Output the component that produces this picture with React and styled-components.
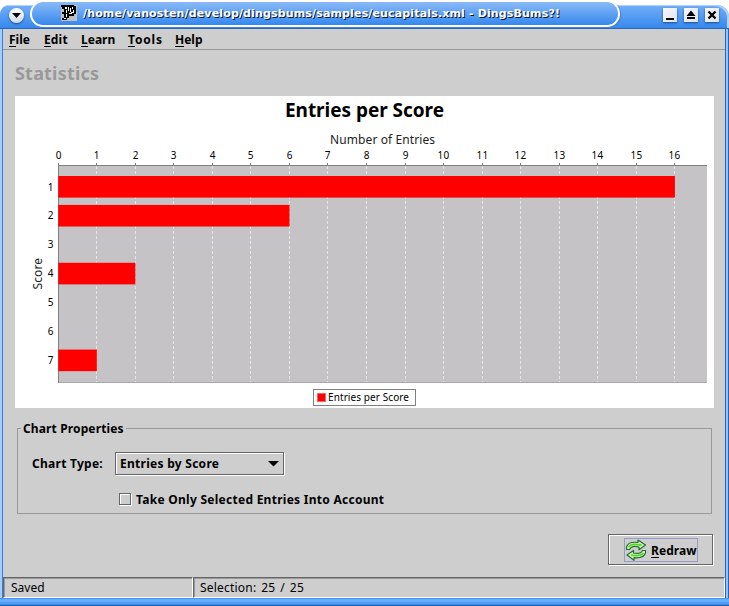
import React from 'react';
import styled, { createGlobalStyle } from 'styled-components';

const GlobalStyle = createGlobalStyle`
  body {
    margin: 0;
    background: #ffffff;
    overflow: hidden;
  }
  * { box-sizing: border-box; }
`;

const Window = styled.div`
  display: flex;
  flex-direction: column;
  width: 729px;
  height: 606px;
  font: bold 12px/16px 'Noto Sans', sans-serif;
  color: #000000;
  white-space: nowrap;
  cursor: default;
`;

const TitleBar = styled.header`
  display: grid;
  grid-template-columns: 30px 590px 1fr;
  height: 24px;
  background: linear-gradient(#73aff8, #3688ee);
  border-radius: 9px 12px 0 0;
  border-bottom: 1px solid #2868b6;
  box-shadow: inset -2px 1px 0 #b0d3ff;
`;

const TitleBack = styled.div`
  padding-top: 5px;
  background: #ffffff;
  width: 729px;
  flex: none;
`;

const MenuKnob = styled.button`
  width: 15px;
  height: 15px;
  margin: 3px 0 0 9px;
  padding: 0;
  border: 0;
  border-radius: 50%;
  background: linear-gradient(#ffffff, #d3d8e5);
  box-shadow: 0 1px 2px #174d92;
  display: grid;
  place-items: center;
`;

const TitleTab = styled.div`
  display: flex;
  align-items: flex-start;
  height: 26px;
  margin-top: -4px;
  padding: 3px 0 0 29px;
  border: solid #ffffff;
  border-width: 1px 2px 2px;
  border-radius: 13px;
  background: linear-gradient(#8abaf9, #3588ed);
  box-shadow: 1px 1px 1px #4380cb;
`;

const TitleText = styled.h1`
  margin: 2px 0 0 6px;
  font: bold 11px/14px 'DejaVu Sans', sans-serif;
  letter-spacing: 0.15px;
  color: #ffffff;
  text-shadow: 1px 1px 0 #0a1730;
`;

const WindowButtons = styled.div`
  display: flex;
  gap: 7px;
  padding: 3px 0 0 43px;
`;

const WindowButton = styled.button`
  width: 14px;
  height: 14px;
  padding: 0;
  border: 0;
  background: linear-gradient(135deg, #f9f9fb, #dfe0e8);
  box-shadow: 0 1px 2px #174d92;
  display: grid;
  place-items: center;
`;

const Frame = styled.div`
  flex: 1;
  display: flex;
  flex-direction: column;
  border: solid;
  border-width: 0 4px 0 3px;
  border-image: linear-gradient(to right, #a4ccff 0 2px, #347fd9 2px 3px, #ffffff 3px 725px, #2868b6 725px 726px, #91c3ff 726px 728px, #2565b0 728px) 0 4 0 3;
  background: #cecece;
`;

const MenuBar = styled.nav`
  display: grid;
  grid-template-columns: 35px 37px 47px 47px 1fr;
  height: 21px;
  padding: 3px 0 0 6px;
  border-bottom: 1px solid #999999;
`;

const MenuItem = styled.span`
  letter-spacing: ${(p) => p.$track || 0}px;
`;

const Mnemonic = styled.span`
  display: inline-block;
  height: 15px;
  border-bottom: 1px solid #000000;
  vertical-align: top;
  letter-spacing: 0;
`;

const Content = styled.main`
  flex: 1;
  display: flex;
  flex-direction: column;
  padding: 11px 11px 0 12px;
`;

const Heading = styled.h2`
  margin: 0;
  height: 35px;
  font-size: 18px;
  line-height: 24px;
  letter-spacing: 0.2px;
  color: #999999;
`;

const ChartPanel = styled.section`
  width: 699px;
  height: 312px;
  background: #ffffff;
  font-weight: normal;
  svg { display: block; }
`;

const Properties = styled.fieldset`
  width: 695px;
  height: 93px;
  margin: 13px 0 0 2px;
  padding: 0;
  border: 0;
  display: grid;
  grid-template-rows: 16px 38px 1fr;
  background:
    linear-gradient(#999999, #999999) 0 7px / 1px 86px no-repeat,
    linear-gradient(#999999, #999999) 100% 7px / 1px 86px no-repeat,
    linear-gradient(#999999, #999999) 0 100% / 100% 1px no-repeat;
`;

const GroupTitle = styled.div`
  display: flex;
  align-items: center;
  gap: 2px;
  letter-spacing: 0.13px;
  line-height: 16px;
  &::before, &::after {
    content: '';
    height: 1px;
    background: #999999;
    margin-top: -1px;
  }
  &::before { width: 4px; }
  &::after { flex: 1; }
`;

const FieldRow = styled.div`
  display: flex;
  align-items: flex-start;
  padding: 15px 0 0 15px;
  letter-spacing: 0.27px;
`;

const FieldLabel = styled.label`
  width: 83px;
  padding-top: 4px;
`;

const Select = styled.button`
  display: flex;
  justify-content: space-between;
  align-items: center;
  width: 169px;
  height: 23px;
  padding: 0 4px;
  font: inherit;
  letter-spacing: inherit;
  color: inherit;
  background: #cecece;
  border: 1px solid #666666;
  box-shadow: inset 1px 1px 0 #ffffff, 1px 1px 0 #ffffff;
`;

const CheckRow = styled.label`
  display: flex;
  gap: 5px;
  padding: 17px 0 0 102px;
  letter-spacing: 0.27px;
`;

const CheckBox = styled.span`
  width: 12px;
  height: 12px;
  margin-top: 1px;
  border: 1px solid #666666;
  box-shadow: inset 1px 1px 0 #ffffff, 1px 1px 0 #ffffff;
`;

const Actions = styled.div`
  display: flex;
  justify-content: flex-end;
  padding-top: 20px;
`;

const PushButton = styled.button`
  width: 105px;
  height: 31px;
  margin-right: 1px;
  padding: 0 0 0 1px;
  font: inherit;
  color: inherit;
  background: #cecece;
  border: 1px solid #666666;
  box-shadow: inset 1px 1px 0 #ffffff, 1px 1px 0 #ffffff;
  display: grid;
  place-items: center;
`;

const FocusArea = styled.span`
  display: flex;
  align-items: center;
  gap: 4px;
  width: 74px;
  height: 24px;
  border: 1px solid #9999cc;
  svg { flex: none; }
`;

const ButtonLabel = styled.span`
  padding-top: 2px;
  letter-spacing: 0.1px;
`;

const StatusBar = styled.footer`
  display: grid;
  grid-template-columns: 190px 1fr;
  height: 21px;
  line-height: 19px;
  font-weight: normal;
`;

const StatusCell = styled.div`
  padding-left: ${(p) => p.$indent}px;
  letter-spacing: ${(p) => p.$track || 0}px;
  word-spacing: ${(p) => p.$gap || 0}px;
  border: 1px solid;
  border-color: #666666 #ffffff #ffffff #666666;
  box-shadow: inset 1px 1px 0 #999999;
`;

const BottomEdge = styled.div`
  height: 8px;
  background: linear-gradient(#4492f2 0 1px, #68adff 1px 4px, #4f9cf7 4px 6px, #3e8beb 6px 7px, #1f5fae 7px);
`;

const SCORES = [16, 6, 0, 2, 0, 0, 1];
const X0 = 43.2;
const STEP = 38.54;
const ROW = 28.93;
const TICKS = Array.from({ length: 17 }, (_, i) => i);
const tickX = (n) => Math.floor(X0 + n * STEP) + 0.5;

function ScoreChart() {
  return (
    <svg width="699" height="312" fontFamily="'Noto Sans', sans-serif" fill="#000">
      <text x="270" y="21" fontSize="19" fontWeight="bold" textLength="159">Entries per Score</text>
      <text x="315" y="48" fontSize="12" textLength="105" fill="#222">Number of Entries</text>
      <rect x="43" y="69" width="649" height="218" fill="#c5c3c6" />
      <path d="M43 286.5H692" stroke="#aaa8aa" />
      <path d="M43.5 69V287" stroke="#808080" />
      {TICKS.map((n) => (
        <g key={n}>
          <text x={tickX(n)} y="63" fontSize="10" textAnchor="middle" letterSpacing={n > 9 ? 0.4 : 0}>{n}</text>
          {n > 0 && <path d={`M${tickX(n)} 70V286`} stroke="#e6e6e6" strokeDasharray="3 2" />}
          <path d={`M${tickX(n)} 67V69`} stroke="#808080" />
        </g>
      ))}
      <path d="M43 69.5H692" stroke="#808080" />
      {SCORES.map((v, i) => (
        <g key={i}>
          <text x="38.5" y={94.5 + i * ROW} fontSize="10" textAnchor="end">{i + 1}</text>
          {v > 0 && (
            <rect x="43.3" y={80 + i * ROW} width={v * STEP} height="21.6" fill="#ff0000" />
          )}
        </g>
      ))}
      <text transform="translate(27 193.5) rotate(-90)" fontSize="12" textLength="31.5" fill="#222">Score</text>
      <rect x="298.5" y="293.5" width="102" height="16" fill="#fff" stroke="#808080" />
      <rect x="302.5" y="297.5" width="8" height="8" fill="#ff0000" stroke="#ff6060" />
      <text x="313" y="305" fontSize="10" textLength="81">Entries per Score</text>
    </svg>
  );
}

function RefreshIcon() {
  return (
    <svg width="22" height="22" viewBox="0 0 22 22" strokeLinejoin="round" stroke="#256d36" strokeWidth="1.2">
      <path d="M1.5 10.5V8C2.5 4.5 6 2.5 13 3.5V1L20.5 6L14 10.8V8C9 6.5 6 7.5 4.5 10.5Z" fill="#d3f6b4" />
      <path d="M20.5 11.5V14C19 18 16 19.3 9 18.7V21.3L2 16L8.5 11.5V14C13 15 16 14.5 17.5 11.5Z" fill="#d3f6b4" />
      <path d="M3.5 8C6 4.5 10 5 16.5 6M18.5 14C16 17 12 17 6 16.2" fill="none" stroke="#55d62c" strokeWidth="1.8" />
    </svg>
  );
}

function AppIcon() {
  return (
    <svg width="16" height="16" viewBox="0 0 16 16" shapeRendering="crispEdges">
      <rect width="16" height="16" fill="#c0c0c0" />
      <path d="M0 0H13V1H15V9H13V11H8V13H6V15H1V13H3V9H1V7H3V4H1V2H0Z" fill="#000" />
      <path d="M4 2H6V4H4ZM5 5H6V8H5ZM7 2H8V6H7ZM9 3H10V7H9ZM11 2H12V4H11ZM12 5H13V8H11V9H8V8H10V7H12ZM5 9H6V12H5ZM3 13H5V14H3Z" fill="#fff" />
    </svg>
  );
}

export default function App() {
  return (
    <>
      <GlobalStyle />
      <Window>
        <TitleBack>
          <TitleBar>
            <MenuKnob aria-label="Window menu">
              <svg width="9" height="6"><path d="M0 0H9L4.5 5Z" /></svg>
            </MenuKnob>
            <TitleTab>
              <AppIcon />
              <TitleText>/home/vanosten/develop/dingsbums/samples/eucapitals.xml - DingsBums?!</TitleText>
            </TitleTab>
            <WindowButtons>
              <WindowButton aria-label="Minimize">
                <svg width="14" height="14"><path d="M3 10H11V12H3Z" /></svg>
              </WindowButton>
              <WindowButton aria-label="Maximize">
                <svg width="14" height="14"><path d="M7 2.5L11.5 8H2.5ZM3 9H11V11H3Z" /></svg>
              </WindowButton>
              <WindowButton aria-label="Close">
                <svg width="14" height="14"><path d="M3.5 3.5L10.5 10.5M10.5 3.5L3.5 10.5" stroke="#000" strokeWidth="2.3" /></svg>
              </WindowButton>
            </WindowButtons>
          </TitleBar>
        </TitleBack>
        <Frame>
          <MenuBar>
            <MenuItem><Mnemonic>F</Mnemonic>ile</MenuItem>
            <MenuItem $track={0.25}><Mnemonic>E</Mnemonic>dit</MenuItem>
            <MenuItem><Mnemonic>L</Mnemonic>earn</MenuItem>
            <MenuItem $track={0.8}><Mnemonic>T</Mnemonic>ools</MenuItem>
            <MenuItem><Mnemonic>H</Mnemonic>elp</MenuItem>
          </MenuBar>
          <Content>
            <Heading>Statistics</Heading>
            <ChartPanel><ScoreChart /></ChartPanel>
            <Properties>
              <GroupTitle>Chart Properties</GroupTitle>
              <FieldRow>
                <FieldLabel>Chart Type:</FieldLabel>
                <Select>
                  Entries by Score
                  <svg width="11" height="6"><path d="M0 0H11L5.5 5.5Z" /></svg>
                </Select>
              </FieldRow>
              <CheckRow>
                <CheckBox />
                Take Only Selected Entries Into Account
              </CheckRow>
            </Properties>
            <Actions>
              <PushButton>
                <FocusArea>
                  <RefreshIcon />
                  <ButtonLabel><Mnemonic>R</Mnemonic>edraw</ButtonLabel>
                </FocusArea>
              </PushButton>
            </Actions>
          </Content>
          <StatusBar>
            <StatusCell $indent={7}>Saved</StatusCell>
            <StatusCell $indent={6} $track={0.2} $gap={1.6}>Selection: 25 / 25</StatusCell>
          </StatusBar>
        </Frame>
        <BottomEdge />
      </Window>
    </>
  );
}
